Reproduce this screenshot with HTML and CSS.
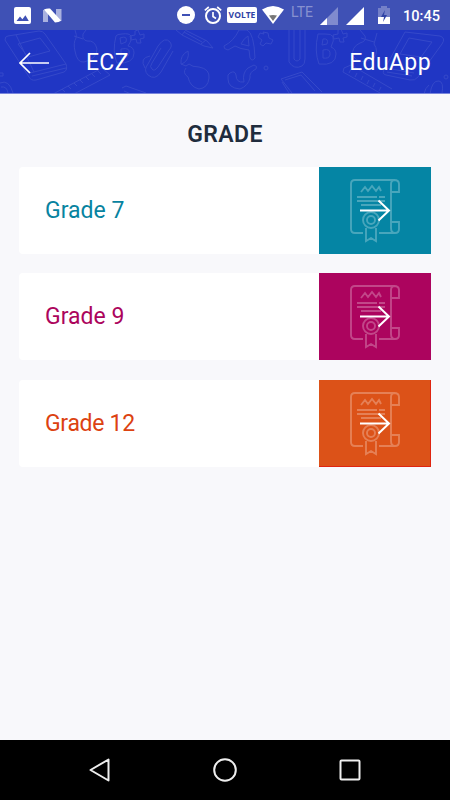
FILE: index.html
```html
<!DOCTYPE html>
<html lang="en">
<head>
    <meta charset="UTF-8">
    <meta name="viewport" content="width=device-width, initial-scale=1.0">
    <title>EduApp - Grade</title>
    <link rel="stylesheet" href="styles.css">
</head>
<body>
    <div class="status-bar">
        <svg class="ic-image" width="17" height="17" viewBox="0 0 17 17"><rect width="17" height="17" rx="2" fill="#fff"/><path d="M2.5 14l3.5-4.6 2.4 2.8 3-4 3.4 5.8z" fill="#3f51b5"/></svg>
        <svg class="ic-n" width="19" height="15" viewBox="0 0 19 15"><path d="M0 2l5-1v13H0zM13 1h5.5v12l-5.5 1z" fill="#a9b1df"/><path d="M1 1.5Q4 0 7 .5L18 12.5q-2 2-6 2z" fill="#fff"/></svg>
        <div class="status-right">
            <svg class="ic-dnd" width="18" height="18" viewBox="0 0 18 18"><circle cx="9" cy="9" r="9" fill="#fff"/><path d="M5 9h8" stroke="#3f51b5" stroke-width="2"/></svg>
            <svg class="ic-alarm" width="18" height="18" viewBox="0 0 18 18" fill="none" stroke="#fff"><circle cx="9" cy="10" r="7" stroke-width="2"/><path d="M9 6v4.5l3 2M.8 4.3L4.8 1M17.2 4.3L13.2 1" stroke-width="1.7"/></svg>
            <span class="volte">VOLTE</span>
            <svg class="ic-wifi" width="22" height="18" viewBox="0 0 22 18"><path d="M0 3.5Q11-3.5 22 3.5L11 18z" fill="#fff"/><path d="M7 9.5q4-1 8 0L11 15z" fill="#777"/></svg>
            <span class="lte">LTE</span>
            <svg class="ic-signal" width="18" height="18" viewBox="0 0 18 18"><path d="M0 18L18 0v18z" fill="#808bce"/><path d="M0 18l7-7v7z" fill="#fff"/></svg>
            <svg class="ic-signal2" width="18" height="18" viewBox="0 0 18 18"><path d="M0 18L18 0v18z" fill="#fff"/></svg>
            <svg class="ic-battery" width="12" height="18" viewBox="0 0 12 18"><path d="M0 2h3V0h6v2h3v9H0z" fill="#7480c8"/><path d="M0 11h12v7H0z" fill="#fff"/><path d="M7 4L3 11h3l-1 5 4-7H6z" fill="#3043a5"/></svg>
            <span class="time">10:45</span>
        </div>
    </div>

    <div class="header">
        <!-- school doodles -->
        <svg class="doodles" viewBox="0 30 450 63" width="450" height="63">
            <path d="M8 36L39 31q4 0 6 3L66 64q2 6-2 8L36 80q-5 1-7-3L5 40q0-4 3-4zM30 73l36-9M32 76l34-8M18 44l22-6 10 13-22 6zM16 35l18 37"/>
            <path d="M75 30q2 5 1 8q-3 5-1 13q2 12 9 11q13-3 13-13q-2-9-10-8q-5-1-4-7l3-4M74 36l9 3"/>
            <path d="M116 36q-4 15 1 27q17 1 17-10q0-6-6-7q9-14-6-12q-5 0-6 2zM120 38q8-3 6 4l-5 2zM121 49q10-2 8 5q-2 5-8 4z"/>
            <path d="M135 31l3-1 2 5 4-1v4l-4 1 1 4h-4l-1-4-5 1-1-4 5-1z"/>
            <path d="M53 94L102 68l8 7L74 94M62 89l3 3M68 86l3 3M74 83l3 3M80 80l3 3M86 77l3 3M92 74l3 3M98 71l3 3"/>
            <path d="M0 73h3v3H0M0 83q9-4 13 10M1 87q6-1 7 6M122 88l4-2 20 7M124 91l7 3"/>
            <path d="M173 51l-12 21q-6 9-13 3q-5-5 0-11l10-18q7-10 12-4q3 4-1 8l-11 17q-4 5-6 2q-3-2 0-6l9-15M145 68q-6-10 5-12"/>
            <path d="M176 30l6 5 22 11 9 2-6-7-22-11M182 35l3-4M201 44l5-4M184 32l18 10"/>
            <path d="M181 64q-1-9 7-13q2 9-6 13zM181 64l5 2 3-2q3 3 10 3q11 2 10 11q-1 10-10 11q-9-2-11-12q-6-4-2-9"/>
            <path d="M224 46q10-5 15-16h8q7 3 8 28q-3 4-5 0l-1-8q-9-1-14-4l-7 4q-5-1-4-4zM241 44q3-6 7-8l1 10z"/>
            <path d="M263 32l5 1 1 5 4 2-2 4-5-1-3 3-3-2 2-4-4-3 2-4 4 1z"/>
            <path d="M230 73q5-3 6 2q0 8 8 7q-2-9 4-14l6-3q4 1 2 4q-7 3-6 9q-2 8-10 11q-12-1-12-10q-1-5 2-6zM268 68a2 2 0 1 1-4 0a2 2 0 1 1 4 0"/>
            <path d="M289 30v32q5 8 13 4q3-2 3-7V30M294 30v29q3 4 6 0V30M281 79l21-7 20 20M281 79l11 14M285 80l16-5 14 16M282 82l7 11"/>
            <path d="M318 34q-4 17 1 30q17 2 17-10q0-5-5-7q7-14-6-13zM323 39q6-1 4 5l-5 1zM323 50q8-2 7 5q-1 4-7 3z"/>
            <path d="M338 30l3-1 2 5 4-1v4l-4 1 1 4h-4l-1-4-5 1-1-4 5-1z"/>
            <path d="M360 30l5 6q2 5-5 7q-9 4-7 13q7 10 21 2q5-7 0-14l3-11M361 38l13 4M344 68l7-3 41 24M344 68l-1 4 37 21M351 69l-2 4M357 73l-2 4M363 76l-2 4M369 80l-2 4M375 83l-2 4M381 87l-2 4"/>
            <path d="M405 32l35 4q6 2 2 8l-24 33q-3 4-8 3l-24-5q-5-1-1-7zM409 38l23 4-11 15-21-3zM386 68l28 5M387 72l25 4M430 94q2-14 9-13q5 1 3 12M444 77a2 2 0 1 0 4 0a2 2 0 1 0-4 0M424 94q1-6 5-9"/>
        </svg>
        <svg class="back" width="31" height="22" viewBox="0 0 31 22"><path d="M30 11H1M11 1L1 11l10 10" fill="none" stroke="#fff" stroke-width="1.7"/></svg>
        <span class="header-title">ECZ</span>
        <span class="brand">EduApp</span>
    </div>

    <div class="content">
        <h2>GRADE</h2>
        <div class="grade teal">
            <span class="grade-name">Grade 7</span>
            <div class="grade-go">
                <svg width="112" height="87" viewBox="0 0 112 87">
                    <g id="certificate" fill="none">
                        <path d="M44 66H36q-4 0-4-4V17q0-4 4-4h39q5 0 5 4v8h-8V17q0-4 4-4M72 25v30M60 66h16q4 0 4-4v-7h-8v6q0 5 4 5M42 25l4-5 3 4 4-5 4 5 3-4 2 4M38 30h20M60 30h6M38 34h28M42 38h20M60 53a8 8 0 1 1-16 0a8 8 0 1 1 16 0M56 53a4 4 0 1 1-8 0a4 4 0 1 1 8 0M47 61v13l5-3 5 3V61" stroke="#fff" stroke-opacity=".27" stroke-width="1.9"/>
                        <path d="M41 43.5h29M59.5 33.5l10.5 10-10.5 10" stroke="#fff" stroke-width="2"/>
                    </g>
                </svg>
            </div>
        </div>
        <div class="grade pink">
            <span class="grade-name">Grade 9</span>
            <div class="grade-go">
                <svg width="112" height="87" viewBox="0 0 112 87"><use href="#certificate"/></svg>
            </div>
        </div>
        <div class="grade orange">
            <span class="grade-name">Grade 12</span>
            <div class="grade-go">
                <svg width="112" height="87" viewBox="0 0 112 87"><use href="#certificate"/></svg>
            </div>
        </div>
    </div>

    <div class="nav-bar">
        <svg width="24" height="24" viewBox="0 0 24 24"><path d="M20.5 1.5v21L2.5 12z"/></svg>
        <svg width="24" height="24" viewBox="0 0 24 24"><circle cx="12" cy="12" r="10.8"/></svg>
        <svg width="24" height="24" viewBox="0 0 24 24"><rect x="2.500" y="2.500" width="19" height="19" rx="1"/></svg>
    </div>
</body>
</html>
```
FILE: styles.css
```css
* {
    box-sizing: border-box;
}
body {
    margin: 0;
    height: 800px;
    display: flex;
    flex-direction: column;
    font-family: Roboto, sans-serif;
    background-color: #f8f8fb;
    overflow: hidden;
}
svg {
    display: block;
    flex: none;
}
.status-bar {
    height: 30px;
    flex: none;
    display: flex;
    align-items: center;
    padding: 0 10px 0 14px;
    background-color: #3f51b5;
    color: white;
}
.ic-n {
    margin-left: 12px;
}
.status-right {
    display: flex;
    align-items: center;
    margin-left: auto;
}
.ic-alarm {
    margin-left: 9px;
}
.volte {
    width: 30px;
    height: 16px;
    margin-left: 5px;
    border-radius: 2px;
    background-color: white;
    color: #3043a5;
    font: bold 8.5px/16px "Open Sans", sans-serif;
    text-align: center;
}
.ic-wifi {
    margin-left: 5px;
}
.lte {
    width: 23px;
    margin-left: 7px;
    padding-bottom: 7px;
    color: #8791d0;
    font-size: 14px;
    line-height: 16px;
}
.ic-signal {
    margin: 2px 0 0 6px;
}
.ic-signal2 {
    margin: 2px 0 0 8px;
}
.ic-battery {
    margin-left: 14px;
}
.time {
    width: 37px;
    margin-left: 13px;
    font-size: 14.6px;
    font-weight: 500;
    line-height: 18px;
    padding-top: 1px;
    white-space: nowrap;
}
.header {
    position: relative;
    height: 64px;
    flex: none;
    display: flex;
    align-items: center;
    padding: 2px 19px 0;
    background-color: #2036c4;
    border-bottom: 1px solid #7a86dc;
    color: white;
    font-size: 23px;
}
.doodles {
    position: absolute;
    top: 0;
    left: 0;
    fill: none;
    stroke: #3549ca;
    stroke-width: 1;
}
.back,
.header-title,
.brand {
    position: relative;
}
.header-title {
    margin-left: 36px;
    letter-spacing: 0.3px;
}
.brand {
    margin-left: auto;
    letter-spacing: 0.4px;
}
.content {
    flex: 1;
    padding: 27px 19px 0;
}
h2 {
    margin: 0 0 18px;
    color: #202c3d;
    font-size: 23px;
    font-weight: 600;
    letter-spacing: 0.4px;
    line-height: 28px;
    text-align: center;
}
.grade {
    display: flex;
    align-items: center;
    height: 87px;
    margin-bottom: 19.3px;
    padding-left: 26px;
    background-color: white;
    border-radius: 4px;
}
.grade-name {
    flex: 1;
    font-size: 23px;
}
.teal {
    color: #0783a0;
}
.teal .grade-go {
    background-color: #0585a4;
}
.pink {
    color: #ac045c;
}
.pink .grade-go {
    background-color: #ac045e;
}
.orange {
    color: #dc4211;
}
.orange .grade-name {
    letter-spacing: -0.3px;
}
.orange .grade-go {
    background-color: #dc5218;
    box-shadow: inset -1px -1px 0 #df2410;
}
.nav-bar {
    height: 60px;
    flex: none;
    display: flex;
    align-items: center;
    justify-content: center;
    gap: 101px;
    background-color: black;
    fill: none;
    stroke: #eee;
    stroke-width: 2;
    stroke-linejoin: round;
}
```
